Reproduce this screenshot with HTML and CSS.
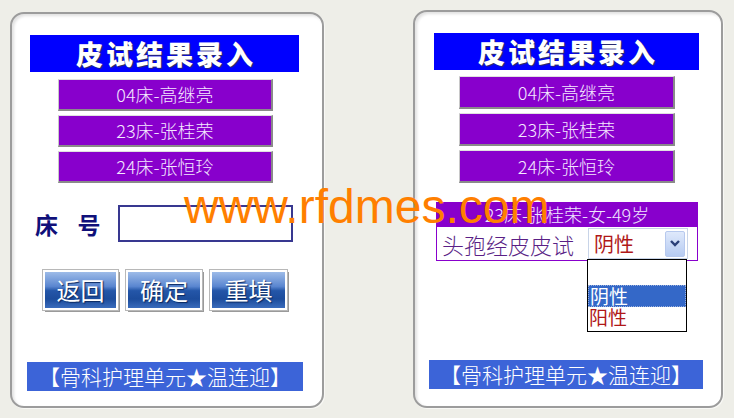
FILE: index.html
```html
<!DOCTYPE html>
<html lang="zh">
<head>
<meta charset="utf-8">
<title>皮试结果录入</title>
<link rel="stylesheet" href="styles.css">
</head>
<body>
<div class="page">
  <section class="panel panel-left">
    <h1 class="title">皮试结果录入</h1>
    <div class="beds">
      <div class="bed">04床-高继亮</div>
      <div class="bed">23床-张桂荣</div>
      <div class="bed">24床-张恒玲</div>
    </div>
    <div class="bed-row">
      <span class="bed-label">床&nbsp;&nbsp;号</span>
      <div class="bed-input"></div>
    </div>
    <div class="actions">
      <div class="act">返回</div>
      <div class="act">确定</div>
      <div class="act">重填</div>
    </div>
    <div class="footer">【骨科护理单元★温连迎】</div>
  </section>

  <section class="panel panel-right">
    <h1 class="title">皮试结果录入</h1>
    <div class="beds">
      <div class="bed">04床-高继亮</div>
      <div class="bed">23床-张桂荣</div>
      <div class="bed">24床-张恒玲</div>
    </div>
    <div class="patient">23床-张桂荣-女-49岁</div>
    <div class="test-row">
      <span class="test-name">头孢经皮皮试</span>
      <div class="select">
        <span class="select-value">阴性</span>
        <span class="select-arrow">
          <svg width="12" height="9" viewBox="0 0 12 9"><path d="M2 2 L6 6 L10 2" fill="none" stroke="#2a3f78" stroke-width="2.4"/></svg>
        </span>
      </div>
      <div class="listbox">
        <div class="opt opt-sel">阴性</div>
        <div class="opt">阳性</div>
      </div>
    </div>
    <div class="footer footer-right">【骨科护理单元★温连迎】</div>
  </section>

  <div class="watermark">www.rfdmes.com</div>
</div>
</body>
</html>
```
FILE: styles.css
```css
html, body {
  margin: 0;
  padding: 0;
}
body {
  background: #eeeee8;
  font-family: "Noto Sans CJK SC", "Noto Sans", sans-serif;
}
.page {
  position: relative;
  width: 734px;
  height: 418px;
  display: flex;
  align-items: flex-start;
  overflow: hidden;
}
.panel {
  box-sizing: border-box;
  background: #fff;
  border: 2px solid #9c9c9c;
  border-radius: 14px;
  box-shadow: inset 2px 2px 3px rgba(0,0,0,0.12), 1px 1px 0 #f8f8f5;
  display: flex;
  flex-direction: column;
  align-items: flex-start;
}
.panel-left {
  width: 314px;
  height: 396px;
  margin: 12px 0 0 10px;
}
.panel-right {
  width: 310px;
  height: 398px;
  margin: 10px 0 0 89px;
}
.title {
  margin: 21px 0 0 18px;
  width: 269px;
  height: 37px;
  background: #0000ff;
  color: #fff;
  font-size: 27px;
  font-weight: 900;
  line-height: 37px;
  text-align: center;
  letter-spacing: 3px;
  text-indent: 3px;
  text-shadow: 1px 1px 1px #303060;
}
.panel-right .title {
  margin: 21px 0 0 19px;
  width: 265px;
}
.beds {
  margin: 7px 0 0 46px;
  display: flex;
  flex-direction: column;
  gap: 4px;
}
.panel-right .beds {
  margin: 6px 0 0 44px;
}
.bed {
  box-sizing: border-box;
  width: 215px;
  height: 32px;
  background: #8800cc;
  border-top: 1px solid #e0e0e0;
  border-left: 1px solid #c8c8c8;
  border-right: 2px solid #8a8a8a;
  border-bottom: 2px solid #8a8a8a;
  color: #f4e8ff;
  font-size: 18px;
  font-weight: 300;
  line-height: 29px;
  text-align: center;
}
.panel-right .bed {
  width: 216px;
  height: 33px;
  line-height: 30px;
}
.bed-row {
  margin: 22px 0 0 23px;
  display: flex;
  align-items: center;
}
.bed-label {
  width: 83px;
  color: #10107a;
  font-size: 23px;
  font-weight: 700;
  letter-spacing: 3px;
}
.bed-input {
  box-sizing: border-box;
  width: 175px;
  height: 37px;
  border: 2px solid #383890;
  background: #fff;
}
.actions {
  margin: 28px 0 0 31px;
  display: flex;
  gap: 8px;
}
.act {
  box-sizing: border-box;
  width: 75px;
  height: 40px;
  border: 2px solid #fff;
  outline: 1px solid #b8b8b8;
  box-shadow: 2px 2px 0 #9a9a9a;
  background: linear-gradient(#9dbbe8 0%, #5a86d0 40%, #2456a8 52%, #1c4c9c 75%, #3a6cbc 100%);
  color: #fff;
  font-size: 24px;
  line-height: 35px;
  text-align: center;
  text-shadow: 1px 1px 1px #0a2860;
}
.act + .act {
  width: 76px;
}
.act:last-child {
  width: 77px;
}
.footer {
  margin: 52px 0 0 15px;
  width: 276px;
  height: 29px;
  background: #3c64d8;
  color: #fff;
  font-size: 21px;
  font-weight: 300;
  line-height: 29px;
  text-align: center;
  white-space: nowrap;
}
.footer-right {
  margin: 99px 0 0 14px;
  width: 274px;
}
.patient {
  margin: 19px 0 0 21px;
  width: 262px;
  height: 25px;
  background: #8800cc;
  color: #f0e6ff;
  font-size: 18px;
  font-weight: 300;
  line-height: 25px;
  text-align: center;
}
.test-row {
  position: relative;
  box-sizing: border-box;
  margin: 0 0 0 21px;
  width: 262px;
  height: 34px;
  border: 1px solid #8800cc;
  border-top: none;
  display: flex;
  align-items: center;
}
.test-name {
  margin-left: 5px;
  width: 146px;
  color: #5a1f86;
  font-size: 22px;
  font-weight: 300;
  line-height: 26px;
}
.select {
  box-sizing: border-box;
  width: 100px;
  height: 31px;
  border: 1px solid #c8d4e8;
  display: flex;
  align-items: center;
  justify-content: space-between;
  padding: 0 2px 0 5px;
}
.select-value {
  color: #b01818;
  font-size: 20px;
  line-height: 26px;
}
.select-arrow {
  box-sizing: border-box;
  width: 20px;
  height: 26px;
  border: 1px solid #b7c9ee;
  border-radius: 2px;
  background: linear-gradient(#dfe9fb, #b6cbf2);
  display: flex;
  align-items: center;
  justify-content: center;
}
.listbox {
  position: absolute;
  left: 150px;
  top: 32px;
  box-sizing: border-box;
  width: 100px;
  height: 73px;
  border: 1px solid #000;
  background: #fff;
  padding-top: 25px;
}
.opt {
  box-sizing: border-box;
  height: 22px;
  color: #b01818;
  font-size: 19px;
  line-height: 20px;
  padding-left: 1px;
}
.opt-sel {
  background: #3468c8;
  color: #fff;
  border: 1px dotted #9ab0dc;
}
.watermark {
  position: absolute;
  left: 184px;
  top: 180px;
  color: #ff7f00;
  font-family: "Liberation Sans", Arial, sans-serif;
  font-size: 48px;
  line-height: 54px;
  white-space: nowrap;
  pointer-events: none;
}
```
